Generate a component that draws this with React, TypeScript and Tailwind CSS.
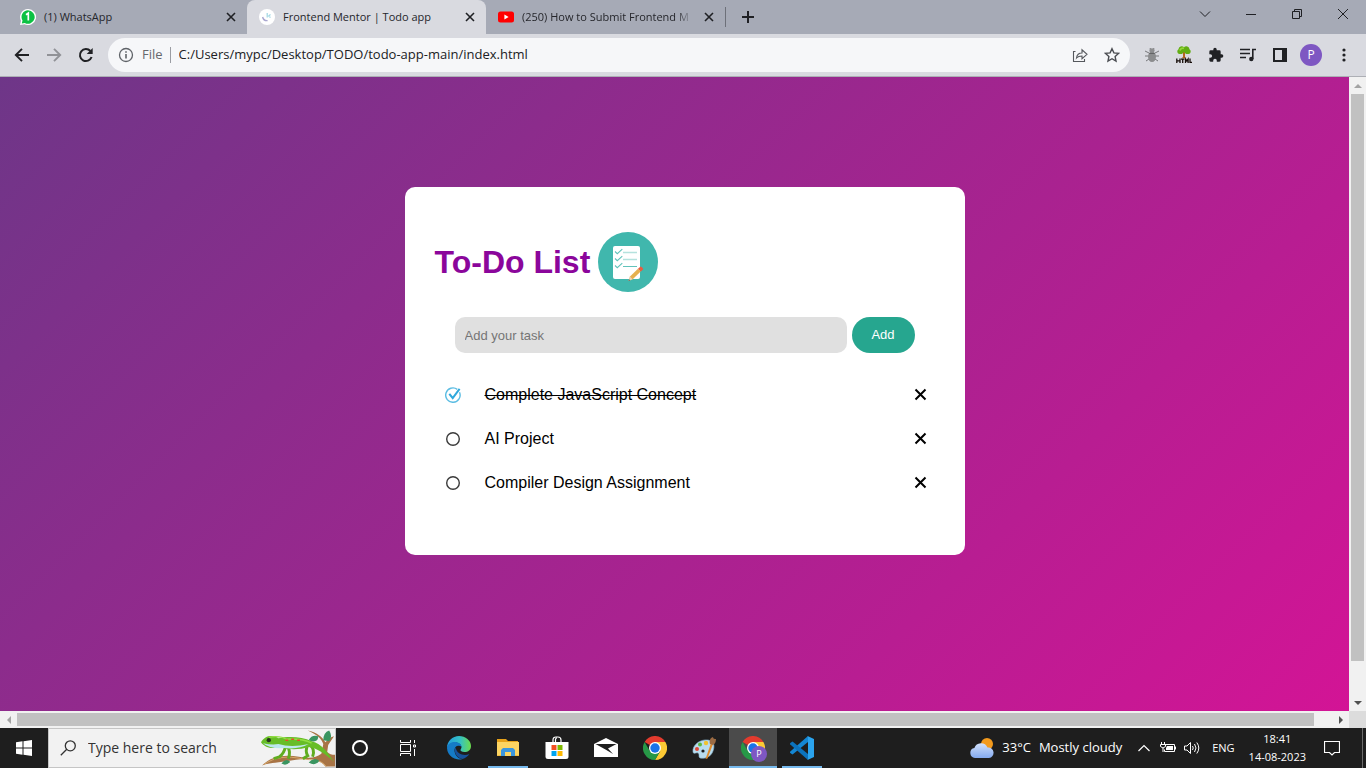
import type { ReactNode } from "react";

const ui = "font-['Open_Sans','Noto_Sans',sans-serif]";

function Stroke({ d, className = "size-4", width = 1 }: { d: string; className?: string; width?: number }) {
  return (
    <svg viewBox="0 0 16 16" fill="none" stroke="currentColor" strokeWidth={width} className={className} aria-hidden="true">
      <path d={d} />
    </svg>
  );
}

function IconButton({ label, className = "", children }: { label: string; className?: string; children: ReactNode }) {
  return (
    <button type="button" aria-label={label} className={`flex shrink-0 items-center justify-center ${className}`}>
      {children}
    </button>
  );
}

function WhatsAppIcon() {
  return (
    <svg viewBox="0 0 16 16" className="size-4 shrink-0" aria-hidden="true">
      <path d="M8 0a8 8 0 1 1-3.4 15.2L0 16l1-4.2A8 8 0 0 1 8 0z" fill="#fff" />
      <path d="M8 1.3A6.7 6.7 0 1 1 4.8 13.9L1.8 14.5l.7-3A6.7 6.7 0 0 1 8 1.3z" fill="#0cc143" />
      <path d="M6 5.8 8.3 4.2v7.3" stroke="#fff" strokeWidth="1.7" fill="none" />
    </svg>
  );
}

function MentorIcon() {
  return (
    <svg viewBox="0 0 16 16" className="size-4 shrink-0" aria-hidden="true">
      <circle cx="8" cy="8" r="8" fill="#fff" />
      <path d="M3.6 8c.6 2.6 2.6 3.8 5 3.6" stroke="#a9a6cf" strokeWidth="1.4" fill="none" />
      <path d="M8.2 4v4.5M9.5 7l2-1.5M9.5 7l2 1.5" stroke="#9fd6e3" strokeWidth="1.2" fill="none" />
    </svg>
  );
}

function YouTubeIcon() {
  return (
    <svg viewBox="0 0 16 16" className="size-4 shrink-0" aria-hidden="true">
      <rect y="2.5" width="16" height="11" rx="2.5" fill="#f00" />
      <path d="M6.4 5.6v4.8L10.6 8z" fill="#fff" />
    </svg>
  );
}

function Tab({ title, icon, active = false }: { title: string; icon: ReactNode; active?: boolean }) {
  return (
    <div className={`flex h-full w-[239px] shrink-0 items-center gap-2 pr-2 pl-3 ${active ? "rounded-t-lg bg-[#d9dae0]" : ""}`}>
      {icon}
      <a href="#tab" className={`min-w-0 flex-1 whitespace-nowrap text-[11px] text-[#25262b] ${title.length > 26 ? "mask-r-from-90%" : ""}`}>
        {title}
      </a>
      <IconButton label={`Close ${title}`} className="size-4">
        <Stroke d="M4 4l8 8M12 4l-8 8" width={1.6} />
      </IconButton>
    </div>
  );
}

function TabBar() {
  return (
    <header className="flex h-[34px] items-stretch bg-[#a6aab6] text-[#1f2024]">
      <div className="flex min-w-0 flex-1 items-center pl-2">
        <Tab title="(1) WhatsApp" icon={<WhatsAppIcon />} />
        <Tab title="Frontend Mentor | Todo app" icon={<MentorIcon />} active />
        <Tab title="(250) How to Submit Frontend M" icon={<YouTubeIcon />} />
        <span className="h-5 w-px bg-[#6d7079]" />
        <IconButton label="New tab" className="ml-3 size-5">
          <Stroke d="M8 2v12M2 8h12" width={2} />
        </IconButton>
      </div>
      <div className="flex h-7">
        <IconButton label="Search tabs" className="w-[46px]"><Stroke d="M3 5.5l5 5 5-5" /></IconButton>
        <IconButton label="Minimize" className="w-[46px]"><Stroke d="M3 8.5h10" /></IconButton>
        <IconButton label="Restore" className="w-[46px]"><Stroke d="M3.5 5.5h7v7h-7zM5.5 5.500v-2h7v7h-2" /></IconButton>
        <IconButton label="Close window" className="w-[46px]"><Stroke d="M3 3l10 10M13 3L3 13" /></IconButton>
      </div>
    </header>
  );
}

function BugIcon() {
  return (
    <svg viewBox="0 0 16 16" className="size-4" aria-hidden="true">
      <path d="M1 4l4 2M15 4l-4 2M1 9h14M2 14l3-2M14 14l-3-2M6 1l1 2M10 1L9 3" stroke="#77787b" fill="none" />
      <ellipse cx="8" cy="3.5" rx="2.6" ry="2.3" fill="#8d8e90" />
      <ellipse cx="8" cy="9.8" rx="4" ry="5.2" fill="#8b8c8e" />
      <path d="M5.2 6.4h5.6" stroke="#5f6062" />
    </svg>
  );
}

function TreeIcon() {
  return (
    <svg viewBox="0 0 16 16" className="size-4 overflow-visible" aria-hidden="true">
      <path d="M7 4h2v6l1.500 1.200h-5L7 10z" fill="#b5651d" />
      <path d="M3.500 7a2.600 2.600 0 0 1-1-4.800A3.200 3.200 0 0 1 8 .2a3.200 3.200 0 0 1 5.500 2 2.600 2.600 0 0 1-1 4.800H10L8 5 6 7z" fill="#62ad13" />
      <path d="M4 3.500A3 3 0 0 1 8 1.300" stroke="#94d63a" strokeWidth="1.800" fill="none" />
      <path d="M.8 11.500V16M4 11.500V16M.8 13.800H4M5 12.100h3.400M6.700 12V16M9.500 16v-4l1.300 1.800L12.100 12v4M14 11.500v3.900h2" stroke="#160c08" strokeWidth="1.300" fill="none" />
    </svg>
  );
}

function Toolbar() {
  return (
    <nav className="flex h-[43px] items-center border-b border-[#adafb5] bg-[#d9dae0] px-3 text-[#202124]">
      <IconButton label="Back" className="size-5"><Stroke d="M15 8H2M8 1.8 1.8 8 8 14.2" width={1.9} /></IconButton>
      <IconButton label="Forward" className="ml-3 size-5 text-[#919297]"><Stroke d="M1 8h13M8 1.8 14.2 8 8 14.2" width={1.9} /></IconButton>
      <IconButton label="Reload" className="ml-3 size-5">
        <svg viewBox="0 0 16 16" className="size-4" aria-hidden="true">
          <path d="M13.6 10A6 6 0 1 1 12.4 4" fill="none" stroke="currentColor" strokeWidth="2" />
          <path d="M14.7 1v6H8.7z" fill="currentColor" />
        </svg>
      </IconButton>
      <div className="ml-3 flex h-[34px] min-w-0 flex-1 items-center rounded-full bg-[#f6f7f9] px-2.5">
        <svg viewBox="0 0 16 16" className="size-4 shrink-0 text-[#5f6368]" aria-hidden="true">
          <circle cx="8" cy="8" r="6.5" fill="none" stroke="currentColor" strokeWidth="1.3" />
          <path d="M8 7v4.5M8 4.2v1.6" stroke="currentColor" strokeWidth="1.6" />
        </svg>
        <span className="ml-2 text-[13px] text-[#66686d]">File</span>
        <span className="ml-[7px] h-4 w-px bg-[#9b9da3]" />
        <input aria-label="Address" defaultValue="C:/Users/mypc/Desktop/TODO/todo-app-main/index.html" className="ml-2 min-w-0 flex-1 bg-transparent text-[13px] outline-none" />
        <IconButton label="Share" className="size-4 text-[#55585d]">
          <Stroke d="M3.500 4.500H1.500v10h11V12M4.500 11c.4-3 2.300-5 5.500-5V2.800l5 4.500-5 4.400V9C7.500 9 5.800 9.600 4.500 11z" width={1.1} />
        </IconButton>
        <IconButton label="Bookmark" className="ml-4 size-4 text-[#4a4c51]">
          <Stroke d="M8 1.700l1.900 4.200 4.600.5-3.400 3.100.9 4.500L8 11.700 4 14l.9-4.500L1.500 6.400l4.600-.5z" width={1.4} />
        </IconButton>
      </div>
      <div className="ml-3.5 flex items-center gap-4">
        <IconButton label="Bug extension" className="size-4"><BugIcon /></IconButton>
        <IconButton label="HTML tree extension" className="size-4"><TreeIcon /></IconButton>
        <IconButton label="Extensions" className="size-4">
          <svg viewBox="0 0 24 24" className="size-4 shrink-0" fill="currentColor" aria-hidden="true">
            <path d="M20.500 11H19V7a2 2 0 0 0-2-2h-4V3.500a2.500 2.500 0 0 0-5 0V5H4a2 2 0 0 0-2 2v3.800h1.500a2.700 2.700 0 0 1 0 5.400H2V20a2 2 0 0 0 2 2h3.800v-1.500a2.700 2.700 0 0 1 5.400 0V22H17a2 2 0 0 0 2-2v-4h1.500a2.500 2.500 0 0 0 0-5z" />
          </svg>
        </IconButton>
        <IconButton label="Media controls" className="size-4">
          <svg viewBox="0 0 16 16" className="size-4" aria-hidden="true">
            <path d="M0 2.500h10M0 6.500h10M0 10.500h6M12.800 12V2.500H16" fill="none" stroke="currentColor" strokeWidth="1.600" />
            <circle cx="11.300" cy="12" r="2.200" fill="currentColor" />
          </svg>
        </IconButton>
        <IconButton label="Side panel" className="size-4">
          <svg viewBox="0 0 16 16" className="size-4" aria-hidden="true">
            <path d="M2 2h12v12H2z" fill="none" stroke="currentColor" strokeWidth="2" />
            <path d="M10 2h4v12h-4z" fill="currentColor" />
          </svg>
        </IconButton>
      </div>
      <IconButton label="Profile" className="ml-3 size-[22px] rounded-full bg-[#7e57c2] text-xs text-white">P</IconButton>
      <IconButton label="Browser menu" className="ml-3 size-5">
        <svg viewBox="0 0 16 16" className="size-4" fill="currentColor" aria-hidden="true">
          <circle cx="8" cy="3" r="1.600" /><circle cx="8" cy="8" r="1.600" /><circle cx="8" cy="13" r="1.600" />
        </svg>
      </IconButton>
    </nav>
  );
}

function ChecklistIcon() {
  return (
    <svg viewBox="0 0 60 60" className="size-[60px] shrink-0" aria-hidden="true">
      <circle cx="30" cy="30" r="30" fill="#40b7ad" />
      <rect x="15" y="14" width="27" height="33" rx="2" fill="#fff" />
      <path d="M25 20.500h14M25 27.500h14" stroke="#b5e2de" strokeWidth="1.300" />
      <path d="M17 19.500l2.300 2.200 5-4.500M17 26.500l2.300 2.200 5-4.500M17 33.500l2.300 2.200 5-4.500" fill="none" stroke="#62c3bb" strokeWidth="1.100" />
      <path d="M25 34.500h14" stroke="#62c3bb" />
      <path d="M30.500 49l1.500-4.500 8-7.700 2.700 2.700-8 7.800z" fill="#e5b04f" />
      <path d="M30.500 49l1.500-4.500 2.700 2.800z" fill="#e9d3b4" />
      <path d="M30.500 49l.6-1.700 1.100 1.100z" fill="#555" />
      <path d="M40 36.800l2-1.900q.8-.6 1.600.1l1.300 1.200q.6.800-.1 1.500l-2.100 1.800z" fill="#e85c41" />
    </svg>
  );
}

function CheckedIcon() {
  return (
    <svg viewBox="0 0 16 16" className="size-4" fill="none" aria-hidden="true">
      <path d="M14.500 5.200A7.200 7.200 0 1 1 12.300 2.400" stroke="#5cbde3" strokeWidth="1.400" />
      <path d="M4.300 6.800l3.400 4.200L14.600 1.800" stroke="#2fa8dc" strokeWidth="2" />
    </svg>
  );
}

const tasks = [
  { title: "Complete JavaScript Concept", done: true },
  { title: "AI Project", done: false },
  { title: "Compiler Design Assignment", done: false },
];

function TodoCard() {
  return (
    <section className="w-[560px] rounded-[10px] bg-white px-[30px] pt-[45px] pb-[50px] font-['Liberation_Sans',Arial,sans-serif] text-black">
      <h1 className="flex items-center gap-2 text-[32px] leading-[60px] font-bold text-[#8b069b]">
        To-Do List
        <ChecklistIcon />
      </h1>
      <form className="mx-5 mt-[25px] flex gap-[5px]" onSubmit={(e) => e.preventDefault()}>
        <input aria-label="Add your task" placeholder="Add your task" className="h-9 min-w-0 flex-1 rounded-[10px] bg-[#e0e0e0] px-2.5 text-[13px] outline-none placeholder:text-[#757575]" />
        <button type="submit" className="h-9 w-[63px] rounded-full bg-[#26a68f] text-[13px] text-white">Add</button>
      </form>
      <ul className="mt-5">
        {tasks.map((task) => (
          <li key={task.title} className="flex h-11 items-center pr-1.5 pl-2.5">
            <label className="flex min-w-0 flex-1 items-center text-base">
              <input type="checkbox" defaultChecked={task.done} className="sr-only" />
              <span className="mr-6 flex size-4 items-center justify-center">
                {task.done ? <CheckedIcon /> : (
                  <svg viewBox="0 0 16 16" className="size-4" aria-hidden="true">
                    <circle cx="8" cy="8" r="6.300" fill="none" stroke="#3a3a3a" strokeWidth="1.400" />
                  </svg>
                )}
              </span>
              <span className={task.done ? "line-through" : ""}>{task.title}</span>
            </label>
            <IconButton label={`Delete ${task.title}`} className="size-4">
              <Stroke d="M2.500 2.500l10 10M12.500 2.500l-10 10" width={2} />
            </IconButton>
          </li>
        ))}
      </ul>
    </section>
  );
}

function Arrow({ d, label, dark = false, className }: { d: string; label: string; dark?: boolean; className: string }) {
  return (
    <IconButton label={label} className={`${className} ${dark ? "text-[#505050]" : "text-[#a3a3a3]"}`}>
      <svg viewBox="0 0 8 8" className="size-2" fill="currentColor" aria-hidden="true"><path d={d} /></svg>
    </IconButton>
  );
}

function Viewport() {
  return (
    <div className="grid min-h-0 flex-1 grid-cols-[minmax(0,1fr)_17px] grid-rows-[minmax(0,1fr)_17px] bg-[#f1f1f1]">
      <main className="overflow-hidden">
        <div className="flex min-h-[672px] w-[calc(100%+20px)] items-start justify-center bg-[linear-gradient(135deg,#6e3688,#d61396)] pt-[110px]">
          <TodoCard />
        </div>
      </main>
      <div className="flex flex-col items-center">
        <Arrow label="Scroll up" d="M0 6l4-4 4 4z" className="h-[17px] w-full" />
        <div className="min-h-0 flex-1 self-stretch px-0.5"><div className="h-[94.500%] bg-[#c1c1c1]" /></div>
        <Arrow label="Scroll down" d="M0 2l4 4 4-4z" dark className="h-[17px] w-full" />
      </div>
      <div className="flex items-center">
        <Arrow label="Scroll left" d="M6 0L2 4l4 4z" className="size-[17px]" />
        <div className="min-w-0 flex-1 self-stretch py-0.5"><div className="h-full w-[98.600%] bg-[#c1c1c1]" /></div>
        <Arrow label="Scroll right" d="M2 0l4 4-4 4z" dark className="size-[17px]" />
      </div>
      <div className="bg-[#dcdcdc]" />
    </div>
  );
}

function Lizard() {
  return (
    <svg viewBox="0 0 76 38" className="h-[38px] w-[74px] shrink-0" aria-hidden="true">
      <path d="M1 37c8-8 20-12 38-9 12 2 17 1 23-3l2-10C62 9 57 5 48 1c9 2 15 6 18 12l6-5 3-1-6 9-1 7q3 3 8 3v12H66c-4-7-16-9-30-7C18 34 8 34 1 37z" fill="#a87445" />
      <path d="M3 36c11-8 24-9 39-6 11 2 19 0 25 8" fill="none" stroke="#d6a86b" />
      <path d="M64 11q0-8 6-10 4 6 0 11zM49 11q3-6 10-4-1 8-10 4zM49 34q5-6 11-2-4 6-11 2zM21 35q4-6 9-2-4 5-9 2z" fill="#3a9560" />
      <path d="M25 18q-1 6-6 10l-6 2M27 17q4 6 1 13M48 16q-3 6 0 11l-5 3M50 16q6 4 3 12" fill="none" stroke="#60ad20" strokeWidth="3" />
      <path d="M0 13C4 6 12 5 18 9c9-2 24-2 34 3 11 3 16 11 23 21-9-8-18-14-26-15-10 3-21 3-30 0-7 2-15 1-19-5z" fill="#67bd27" />
      <path d="M2 14q8 2 16 1 13 4 31 0-11 6-25 4Q9 20 2 14z" fill="#bde7ef" />
      <path d="M8 8q12-2 18 2 16-1 26 4" fill="none" stroke="#93df42" strokeWidth="1.500" />
      <path d="M25 11h3M31 10h3M37 11h3" stroke="#e24d29" strokeWidth="1.500" />
      <circle cx="8" cy="11" r="2.200" fill="#26351d" />
    </svg>
  );
}

function EdgeIcon() {
  return (
    <svg viewBox="0 0 24 24" className="size-6" aria-hidden="true">
      <defs>
        <linearGradient id="edgeTop" x1="0" x2="1"><stop stopColor="#239dde" /><stop offset=".55" stopColor="#35c1c4" /><stop offset="1" stopColor="#6bdc4c" /></linearGradient>
      </defs>
      <path d="M0 12C0 5 5.500 0 12 0s12 4.500 12 10c0 4-3 6-6.500 6-3 0-4-1.200-4-2s1-1.200 1-3c0-2-2.500-4.500-6-4.500-4 0-7.500 2.500-8.500 5.500z" fill="url(#edgeTop)" />
      <path d="M0 12c.3-3.600 3.500-6 7.500-6 4.500 0 7 2.500 7 5-1-1-2-1.200-3-1.200-2.500 0-4 2-4 4.500 0 4 3 8.700 8 8.700A12 12 0 0 1 0 12z" fill="#157bc7" />
      <path d="M8.500 11.500C6.500 15 9 22 15.500 23c3-.8 5.300-2.600 6.800-5-4.500 2-12 1-13.800-6.500z" fill="#16519b" />
    </svg>
  );
}

function ChromeIcon() {
  return (
    <svg viewBox="0 0 24 24" className="size-6" aria-hidden="true">
      <path d="M12 12 1.600 6A12 12 0 0 1 22.400 6z" fill="#e33b2e" />
      <path d="M12 12V6h10.400A12 12 0 0 1 12 24l5.200-9z" fill="#fcc934" />
      <path d="M12 12l5.200 3L12 24A12 12 0 0 1 1.600 6l5.200 9z" fill="#279847" />
      <circle cx="12" cy="12" r="6" fill="#fff" /><circle cx="12" cy="12" r="4.700" fill="#1a73e8" />
    </svg>
  );
}

function FolderIcon() {
  return (
    <svg viewBox="0 0 24 24" className="size-6" aria-hidden="true">
      <path d="M1 3h9l2 2h10v5H1z" fill="#e7a21a" />
      <path d="M1 6h22v14H1z" fill="#fcd462" />
      <path d="M5 20v-6l2-2h10l2 2v6h-4v-4H9v4z" fill="#3b96dd" />
      <path d="M1 19h4v1H1zM19 19h4v1h-4z" fill="#f2bd42" />
    </svg>
  );
}

function StoreIcon() {
  return (
    <svg viewBox="0 0 24 24" className="size-6" aria-hidden="true">
      <path d="M8 7V4q0-3 3-3h2q3 0 3 3v3M10.500 6V3.500Q10.500 2 12 2" fill="none" stroke="#fff" strokeWidth="1.200" />
      <path d="M.5 6h23v14.500q0 2.500-2.500 2.500H3Q.5 23 .5 20.500z" fill="#fff" />
      <path d="M6.500 9h5v5h-5z" fill="#f25022" /><path d="M12.500 9h5v5h-5z" fill="#7fba00" />
      <path d="M6.500 15h5v5h-5z" fill="#00a4ef" /><path d="M12.500 15h5v5h-5z" fill="#ffb900" />
    </svg>
  );
}

function MailIcon() {
  return (
    <svg viewBox="0 0 24 24" className="size-6" aria-hidden="true">
      <path d="M0 8l12-6 12 6v13H0z" fill="#fff" />
      <path d="M1.500 8h21L14 12.500l5 5.500-7.500-4.500z" fill="#1e1e1e" />
    </svg>
  );
}

function PaintIcon() {
  return (
    <svg viewBox="0 0 24 24" className="size-6" aria-hidden="true">
      <path d="M1 16C0 9 8 3 16 4c6 1 7 6 5 11-2 6-8 8-13 7-2-1 0-4-2-5s-4 2-5-1z" fill="#b9dcee" stroke="#8ab3cd" strokeWidth=".6" />
      <circle cx="5" cy="13" r="2" fill="#e04635" /><circle cx="8" cy="8.500" r="2" fill="#59b843" /><circle cx="14" cy="7" r="2.200" fill="#f0c22f" /><circle cx="11" cy="15" r="1.600" fill="#1e1e1e" />
      <path d="M13.500 23 19 7l2 1-5.500 14.500z" fill="#e08b2c" />
      <path d="M18 8c-1-3 0-6 3-7 0 2 2 2 3 2 0 3-1 5-3 6z" fill="#9b6b43" />
    </svg>
  );
}

function CodeIcon() {
  return (
    <svg viewBox="0 0 24 24" className="size-6" aria-hidden="true">
      <path d="M18 0v6L2.500 18.500.3 17q-.6-.8 0-1.500z" fill="#1487d4" />
      <path d="M18 24v-6L2.500 5.500.3 7q-.6.800 0 1.500z" fill="#0c73bd" />
      <path d="M17.500 0 24 3v18l-6.500 3q.5-.6.5-2V2q0-1.400-.5-2z" fill="#2ba4ee" />
    </svg>
  );
}

function TaskItem({ label, children, state = "" }: { label: string; children: ReactNode; state?: string }) {
  return (
    <IconButton label={label} className={`w-12 self-stretch ${state}`}>{children}</IconButton>
  );
}

function WeatherIcon() {
  return (
    <svg viewBox="0 0 24 20" className="h-5 w-6" aria-hidden="true">
      <defs>
        <linearGradient id="cloud" x2="0" y2="1"><stop stopColor="#d2e1fb" /><stop offset="1" stopColor="#84aaf0" /></linearGradient>
      </defs>
      <circle cx="17" cy="6" r="6" fill="#f39a1d" />
      <path d="M5 20a5 5 0 0 1-.6-9.900A7 7 0 0 1 17.500 9.500 5.300 5.300 0 0 1 19 20z" fill="url(#cloud)" />
    </svg>
  );
}

function Taskbar() {
  return (
    <footer className="flex h-10 items-center bg-[#1e1e1e] text-white">
      <TaskItem label="Start">
        <svg viewBox="0 0 16 16" className="size-4" fill="#fff" aria-hidden="true">
          <path d="M0 2.200 6.500 1.300V7.500H0zM7.500 1.200 16 0v7.500H7.500zM0 8.500h6.500v6.200L0 13.800zM7.500 8.500H16V16l-8.500-1.200z" />
        </svg>
      </TaskItem>
      <div className="flex h-10 w-72 items-center border border-[#c5c5c5] bg-[#f2f2f2] pl-[11px] text-[#333]">
        <Stroke d="M6.500 9.500.8 15.200M10.300.8a5 5 0 1 1 0 10 5 5 0 1 1 0-10z" width={1.3} />
        <input aria-label="Type here to search" placeholder="Type here to search" className="ml-3 min-w-0 flex-1 bg-transparent text-sm outline-none placeholder:text-[#333]" />
        <Lizard />
      </div>
      <TaskItem label="Cortana"><span className="size-4 rounded-full border-2 border-white" /></TaskItem>
      <TaskItem label="Task view"><Stroke d="M.5 0v2.500h10V0M.5 16v-2.500h10V16M.5 4.500h10v7H.5zM14.500 0v3M14.500 9v7M13.500 5h2v2h-2z" /></TaskItem>
      <div className="flex items-center gap-px self-stretch pl-[3px]">
        <TaskItem label="Edge"><EdgeIcon /></TaskItem>
        <TaskItem label="File Explorer" state="bg-[linear-gradient(#76b9ed,#76b9ed)] bg-[length:40px_2px] bg-bottom bg-no-repeat"><FolderIcon /></TaskItem>
        <TaskItem label="Store"><StoreIcon /></TaskItem>
        <TaskItem label="Mail"><MailIcon /></TaskItem>
        <TaskItem label="Chrome"><ChromeIcon /></TaskItem>
        <TaskItem label="Paint"><PaintIcon /></TaskItem>
        <TaskItem label="Chrome, profile P" state="relative bg-[#4b4b4b] bg-[linear-gradient(#76b9ed,#76b9ed)] bg-[length:100%_2px] bg-bottom bg-no-repeat">
          <ChromeIcon />
          <span className="absolute right-2.5 bottom-1.5 flex size-4 items-center justify-center rounded-full bg-[#7e57c2] text-[9px]">P</span>
        </TaskItem>
        <TaskItem label="Visual Studio Code" state="bg-[linear-gradient(#76b9ed,#76b9ed)] bg-[length:40px_2px] bg-bottom bg-no-repeat"><CodeIcon /></TaskItem>
      </div>
      <div className="ml-auto flex items-center self-stretch">
        <button type="button" className="flex items-center gap-2 text-[13px] whitespace-nowrap">
          <WeatherIcon /><span>33°C</span><span>Mostly cloudy</span>
        </button>
        <IconButton label="Show hidden icons" className="ml-3.5 size-4"><Stroke d="M2.500 11 8 5.500l5.500 5.500" width={1.2} /></IconButton>
        <IconButton label="Battery" className="ml-2 size-4">
          <svg viewBox="0 0 16 16" className="size-4" fill="none" stroke="#fff" aria-hidden="true">
            <path d="M5 4.500h9.500v7h-10v-2M15.500 6.500v3M1.500 2v2M4.500 2v2M.5 4.500h5v2L3 8 .5 6.500zM3 8v4" />
            <path d="M7 6h6v4H6V8z" fill="#fff" stroke="none" />
          </svg>
        </IconButton>
        <IconButton label="Volume" className="ml-2 size-4"><Stroke d="M.5 6v4h2.500l3.500 3.500v-11L3 6zM8.500 6q1.500 2 0 4M10.500 4q3 4 0 8M12.800 2.500q4 5.500 0 11" /></IconButton>
        <button type="button" className="ml-3 text-[11px]">ENG</button>
        <button type="button" className="ml-3.5 flex flex-col items-center text-[11px] leading-[18px] whitespace-nowrap"><span>18:41</span><span>14-08-2023</span></button>
        <IconButton label="Notifications" className="ml-4 size-5"><Stroke d="M.5 1.500h15v11h-5L8 15l-2.500-2.500h-5z" width={1.2} /></IconButton>
        <span className="ml-5 h-full w-px bg-[#6b6b6b]" />
        <span className="w-[3px]" />
      </div>
    </footer>
  );
}

export default function App() {
  return (
    <div className={`flex h-screen flex-col overflow-hidden ${ui}`}>
      <TabBar />
      <Toolbar />
      <Viewport />
      <Taskbar />
    </div>
  );
}
